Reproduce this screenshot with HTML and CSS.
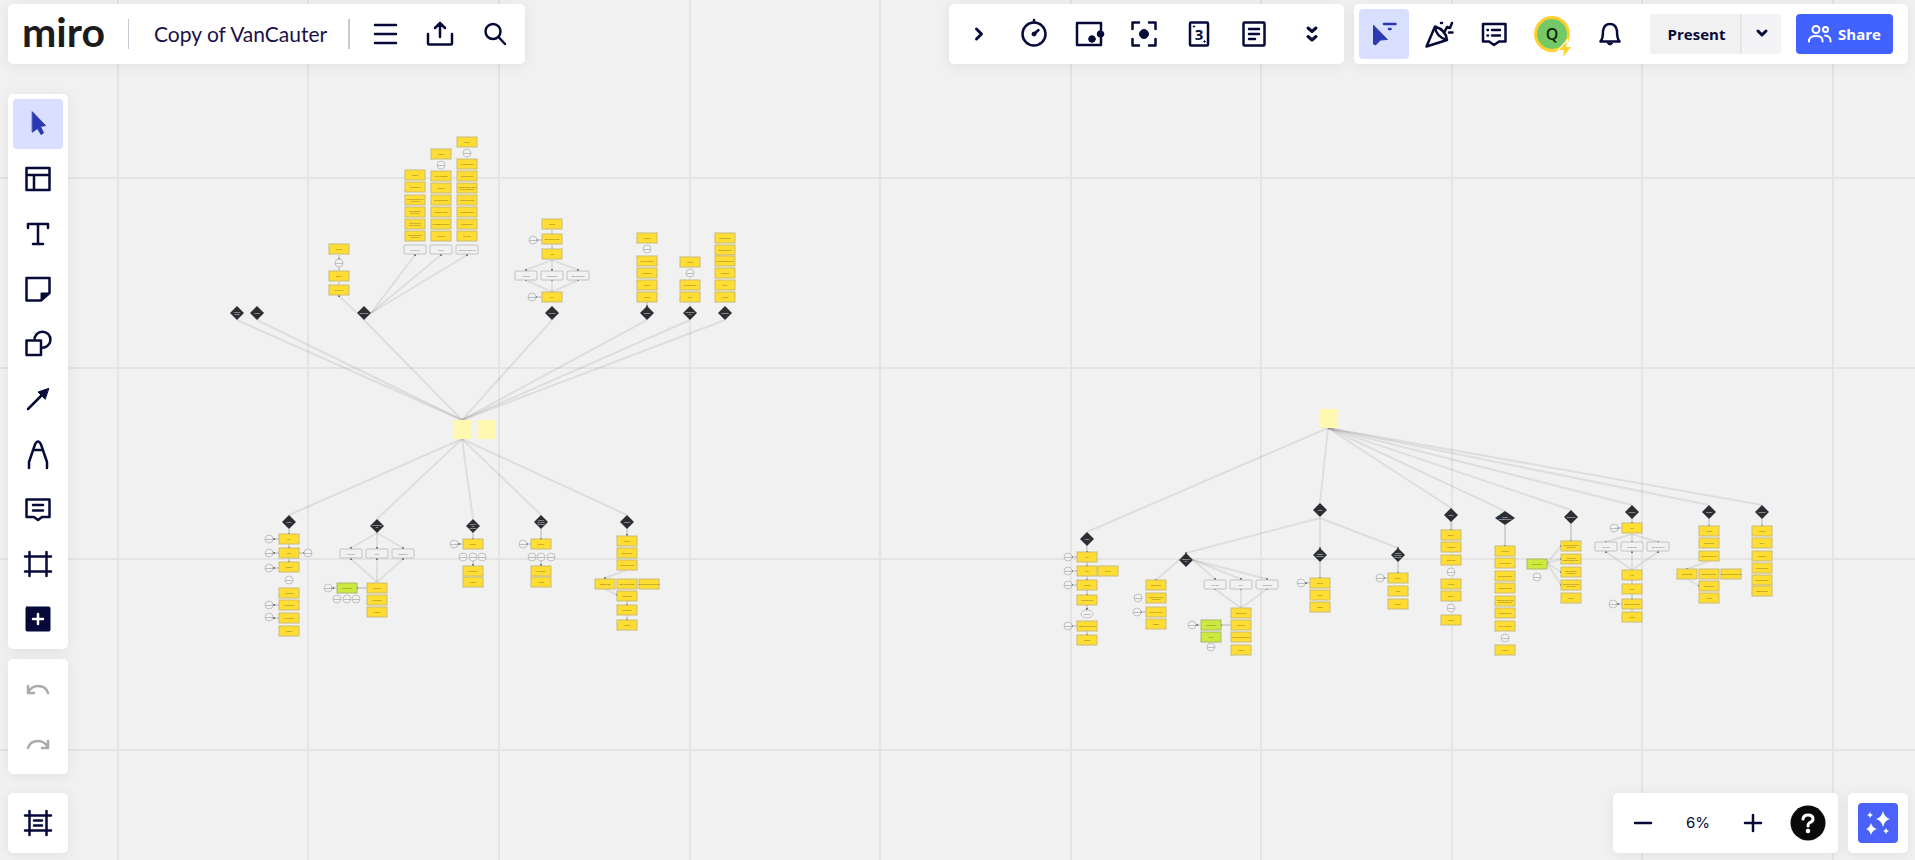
FILE: index.html
```html
<!DOCTYPE html>
<html lang="en">
<head>
<meta charset="utf-8">
<title>Copy of VanCauter</title>
<link rel="stylesheet" href="styles.css">
</head>
<body>
<svg class="board" id="board" role="img" aria-label="Board canvas"></svg>

<div class="app">
  <header class="topbar">
    <div class="panel row">
      <a class="logo" href="#">miro</a>
      <span class="rule"></span>
      <h1 class="title">Copy of VanCauter</h1>
      <span class="rule rule-strong"></span>
      <button class="tool" aria-label="Main menu"><svg class="icon" viewBox="-15 -15 30 30"><path d="M-10-9H11M-10 0H11M-10 9H11"/></svg></button>
      <button class="tool" aria-label="Export"><svg class="icon" viewBox="-15 -15 30 30"><path d="M-12 0v9.500q0 1 1 1h22q1 0 1-1V0M0 3V-11M-5-6L0-11L5-6"/></svg></button>
      <button class="tool" aria-label="Search"><svg class="icon" viewBox="-15 -15 30 30"><circle cx="-2" cy="-2.500" r="7.500"/><path d="M3.500 3L10 10"/></svg></button>
    </div>

    <div class="row groups">
      <div class="panel row">
        <button class="tool" aria-label="Collapse"><svg class="icon bold" viewBox="-15 -15 30 30"><path d="M-2.500-5L2.500 0L-2.500 5"/></svg></button>
        <button class="tool" aria-label="Timer"><svg class="icon" viewBox="-15 -15 30 30"><circle r="11.500"/><path d="M0-14v2M0 0L4.500-4"/><circle class="solid" r="2"/></svg></button>
        <button class="tool" aria-label="Voting"><svg class="icon" viewBox="-15 -15 30 30"><path d="M12-4V-11H-12V11H12V4"/><circle class="solid" cx="3" cy="5" r="3.300"/><circle class="solid" cx="11.500" cy="0" r="3.300"/></svg></button>
        <button class="tool" aria-label="Focus"><svg class="icon" viewBox="-15 -15 30 30"><path d="M-11.500-5V-11.500H-5M5-11.500H11.500V-5M11.500 5V11.500H5M-5 11.500H-11.500V5"/><circle class="solid" r="4.500"/></svg></button>
        <button class="tool" aria-label="Estimation"><svg class="icon" viewBox="-15 -15 30 30"><rect x="-9" y="-11.500" width="18" height="23" rx="1"/><text class="card-number" y="6">3</text><circle class="solid" cx="-5" cy="-7.500" r=".700"/><circle class="solid" cx="5.500" cy="7.500" r=".700"/></svg></button>
        <button class="tool" aria-label="Notes"><svg class="icon" viewBox="-15 -15 30 30"><rect x="-10.500" y="-11.500" width="21" height="23" rx="1"/><path d="M-5-5H5M-5 0H5M-5 5H1"/></svg></button>
        <button class="tool tool-wide" aria-label="More tools"><svg class="icon bold" viewBox="-15 -15 30 30"><path d="M-4-6L0-2.500L4-6M-4 2.500L0 6L4 2.500"/></svg></button>
      </div>

      <div class="panel row">
        <button class="tool active" aria-label="Show cursors"><svg class="icon" viewBox="-15 -15 30 30"><path class="solid" d="M-10.500-8.500V10L-8.500 11L-3.500 6L3 5.500Z"/><path d="M0-10H11.500M5-5h1.500"/></svg></button>
        <button class="tool" aria-label="Reactions"><svg class="icon" viewBox="-15 -15 30 30"><path d="M-4-7.500L-12.500 12.500L8 6Q7-4-4-7.500ZM-4-7.500Q-3 3 8 6M6-3L8-7L11-6L13-11M10-1.500H13.500M2-11h1"/></svg></button>
        <button class="tool" aria-label="Comments"><svg class="icon" viewBox="-15 -15 30 30"><path d="M-11-10H11.500V7.500H5L0 11L-5 7.500H-11ZM-6.500-4h.500M-6.500 1.500h.500M-2-4H6M-2 1.500H6"/></svg></button>
        <button class="avatar-button" aria-label="Account"><span class="avatar">Q</span><svg class="bolt" viewBox="0 0 16 20"><path d="M10 2L2 11H7L6 18L14 8H9Z"/></svg></button>
        <button class="tool bell" aria-label="Notifications"><svg class="icon" viewBox="-15 -15 30 30"><path d="M-9.500 7.500Q-7 5-7-3Q-6-10 0-10Q6-10 7-3Q7 5 9.500 7.500Z"/><path class="solid" d="M-2.500 9H2.500Q2 11 0 11Q-2 11-2.500 9Z"/></svg></button>
        <div class="row present">
          <button class="present-main">Present</button>
          <button class="present-more" aria-label="Presentation options"><svg class="icon bold" viewBox="-15 -15 30 30"><path d="M-4-3L0 1L4-3"/></svg></button>
        </div>
        <button class="share"><svg class="people" viewBox="0 0 24 20"><circle cx="8" cy="5.500" r="3.500"/><circle cx="17.500" cy="5.500" r="2.500"/><path d="M1 17.500V16Q2 12 8 12Q14 12 14.500 16V17.500M17 11.500Q22 12 22.500 16V17.500"/></svg>Share</button>
      </div>
    </div>
  </header>

  <main class="stage">
    <nav class="rail" aria-label="Tools">
      <div class="panel column">
        <button class="tool active" aria-label="Select"><svg class="icon" viewBox="-15 -15 30 30"><path class="solid thin" d="M-5.500-12L7.500 1.500L2.500 2.500L5.500 9L3 10.500L-.500 4.500L-5.500 8Z"/></svg></button>
        <button class="tool" aria-label="Templates"><svg class="icon" viewBox="-15 -15 30 30"><path d="M-11.500-11H11.500V11H-11.500ZM-11.500-4H11.500M-4-4V11"/></svg></button>
        <button class="tool" aria-label="Text"><svg class="icon" viewBox="-15 -15 30 30"><path d="M-10-6V-10H10V-6M0-10V10M-5 10H5"/></svg></button>
        <button class="tool" aria-label="Sticky note"><svg class="icon" viewBox="-15 -15 30 30"><path d="M-11.500-11H11.500V4L3 11.500H-11.500Z"/><path class="solid" d="M3 11V4H11.500Z"/></svg></button>
        <button class="tool" aria-label="Shapes"><svg class="icon" viewBox="-15 -15 30 30"><path d="M-11.500-3.500H3V11H-11.500ZM-3.500-3.500A8 8 0 1 1 3 3.500"/></svg></button>
        <button class="tool" aria-label="Connection line"><svg class="icon" viewBox="-15 -15 30 30"><path d="M-10 10L5-5"/><path class="solid thin" d="M10.500-10.500L0-7L7 0Z"/></svg></button>
        <button class="tool" aria-label="Pen"><svg class="icon" viewBox="-15 -15 30 30"><path d="M-9 14V8L-3-9.500Q0-15.500 3-9.500L9 8V14M-5-4H5"/></svg></button>
        <button class="tool" aria-label="Comment"><svg class="icon" viewBox="-15 -15 30 30"><path d="M-11.500-9.500H11.500V8H4L0 11L-4 8H-11.500ZM-5-4H5M-5 1.500H5"/></svg></button>
        <button class="tool" aria-label="Frame"><svg class="icon" viewBox="-15 -15 30 30"><path d="M-13-7.500H13M-13 7.500H13M-8.500-12V12M8.500-12V12"/></svg></button>
        <button class="tool" aria-label="More apps"><svg class="icon" viewBox="-15 -15 30 30"><rect class="solid" x="-12" y="-12" width="24" height="24" rx="1"/><path class="light" d="M-5 0H5M0-5V5"/></svg></button>
      </div>
      <div class="panel column">
        <button class="tool" disabled aria-label="Undo"><svg class="icon" viewBox="-15 -15 30 30"><path d="M10 4Q8-3 0-3Q-6-3-10 3M-10-3V4H-4"/></svg></button>
        <button class="tool" disabled aria-label="Redo"><svg class="icon" viewBox="-15 -15 30 30"><path d="M-10 4Q-8-3 0-3Q6-3 10 3M10-3V4H4"/></svg></button>
      </div>
      <div class="panel column rail-end">
        <button class="tool" aria-label="Frames list"><svg class="icon" viewBox="-15 -15 30 30"><path d="M-13-7.500H13M-13 7.500H13M-8.500-12V12M8.500-12V12M-4-2.500H4M-4 2.500H4"/></svg></button>
      </div>
    </nav>

    <div class="row corner">
      <div class="panel row">
        <button class="tool" aria-label="Zoom out"><svg class="icon" viewBox="-15 -15 30 30"><path d="M-8 0H8"/></svg></button>
        <button class="tool zoom-level">6%</button>
        <button class="tool" aria-label="Zoom in"><svg class="icon" viewBox="-15 -15 30 30"><path d="M-8 0H8M0-8V8"/></svg></button>
        <button class="tool" aria-label="Help"><svg class="help" viewBox="-18 -18 36 36"><circle class="help-disc" r="17.500"/><path d="M-5-4Q-4.500-8 0-8Q5-8 5-4Q5-1.500 2-.500Q0 .500 0 3"/><circle class="help-dot" cy="8" r="2.300"/></svg></button>
      </div>
      <div class="panel row">
        <button class="tool" aria-label="AI assistant"><svg class="spark" viewBox="0 0 40 40"><path d="M25 8Q26.500 14.500 32 16Q26.500 17.500 25 24Q23.500 17.500 18 16Q23.500 14.500 25 8ZM13 20Q14.500 25 19 26Q14.500 27 13 32Q11.500 27 8 26Q11.500 25 13 20ZM12 9Q12.500 11.500 15 12Q12.500 12.500 12 15Q11.500 12.500 9 12Q11.500 11.500 12 9ZM28 25Q28.500 27.500 31 28Q28.500 28.500 28 31Q27.500 28.500 25 28Q27.500 27.500 28 25Z"/></svg></button>
      </div>
    </div>
  </main>
</div>
<script src="board.js"></script>
</body>
</html>
```
FILE: styles.css
```css
* { box-sizing: border-box; }

body {
  margin: 0;
  overflow: hidden;
  background: #f1f1f1;
  color: #050a38;
  font-family: "Open Sans", "Noto Sans", sans-serif;
}

button {
  border: 0;
  padding: 0;
  background: none;
  color: inherit;
  font: inherit;
  cursor: pointer;
}

/* Canvas */
.board { position: absolute; inset: 0; width: 100%; height: 100%; }
.grid-line { stroke: #e4e4e4; stroke-width: 2px; }
.link { stroke: #000; stroke-opacity: .08; stroke-width: 2px; fill: none; }
.short-link { stroke: #b4b4b4; stroke-width: 1px; }
.tip { fill: #555; }
.sticky { fill: #fff8b0; }
.note { fill: #ffdd33; stroke: #c9bb78; }
.note-green { fill: #cbea3d; stroke: #a9b670; }
.pill, .ring { fill: #f1f1f1; stroke: #c2c2c2; }
.diamond { fill: #2d2e33; }
.label { font-family: "Open Sans", sans-serif; font-size: 2px; text-anchor: middle; fill: #6b5a10; }
.label-light { fill: #fff; }
.label-grey { fill: #666; }

/* Page frame */
.app {
  position: relative;
  display: flex;
  flex-direction: column;
  gap: 30px;
  min-height: 100vh;
  padding: 4px 7px 7px 8px;
  pointer-events: none;
}
.panel {
  padding: 5px;
  border-radius: 5px;
  background: #fff;
  box-shadow: 0 2px 14px rgba(5, 0, 56, .07);
  pointer-events: auto;
}
.row { display: flex; align-items: center; }
.column { display: flex; flex-direction: column; gap: 5px; }
.panel.row { gap: 5px; }
.topbar { display: flex; justify-content: space-between; }
.groups { gap: 10px; }
.stage { flex: 1; display: flex; justify-content: space-between; }
.rail { display: flex; flex-direction: column; gap: 10px; }
.rail-end { margin-top: auto; }
.corner { gap: 10px; align-self: flex-end; }

/* Tools */
.tool {
  display: flex;
  align-items: center;
  justify-content: center;
  width: 50px;
  height: 50px;
  border-radius: 4px;
}
.tool-wide { width: 55px; }
.active { background: #d9dfff; color: #2b3ab3; }
.tool:disabled { color: #aaa; }
.icon {
  width: 30px;
  height: 30px;
  overflow: visible;
  fill: none;
  stroke: currentColor;
  stroke-width: 2.500px;
  stroke-linecap: round;
  stroke-linejoin: round;
}
.bold { stroke-width: 3px; }
.solid { fill: currentColor; stroke-width: 1px; }
.thin { stroke-width: 1px; }
.light { stroke: #fff; }
.card-number {
  font: 700 15px "Open Sans", sans-serif;
  text-anchor: middle;
  fill: currentColor;
  stroke: none;
}

/* Board title */
.logo {
  width: 92px;
  padding: 0 0 4px 9px;
  color: #1c1c1e;
  font: 700 41px/46px Lato, sans-serif;
  text-decoration: none;
}
.rule { width: 1px; height: 30px; margin-left: 18px; background: #c9c9d6; }
.rule-strong { width: 2px; margin: 0 5px 0 16px; }
.title {
  margin: 0 0 0 20px;
  color: #1a1148;
  font: 400 21px/28px Lato, sans-serif;
}

/* Account group */
.avatar-button { position: relative; width: 56px; height: 50px; }
.avatar {
  display: block;
  width: 36px;
  height: 36px;
  margin: 0 auto;
  border: 3px solid #ffd02f;
  border-radius: 50%;
  background: #74c966;
  color: #10240d;
  font: 600 16px/30px "Open Sans", sans-serif;
}
.bolt { position: absolute; right: 6px; bottom: 0; width: 18px; height: 20px; fill: #ffd02f; stroke: #fff; stroke-width: 2px; paint-order: stroke; }
.present {
  gap: 2px;
  margin-left: 10px;
  border-radius: 4px;
  overflow: hidden;
  background: #e4e4ea;
  font-size: 15px;
  font-weight: 700;
}
.present-main { min-width: 90px; height: 40px; padding: 0 12px 0 15px; background: #f1f1f2; }
.present-more { display: flex; align-items: center; justify-content: center; width: 39px; height: 40px; background: #f4f4f7; }
.share {
  display: flex;
  align-items: center;
  justify-content: center;
  gap: 6px;
  min-width: 97px;
  height: 40px;
  margin: 0 10px;
  border-radius: 4px;
  background: #4262ff;
  color: #fff;
  font-size: 15px;
  font-weight: 700;
}
.people { width: 24px; height: 20px; fill: none; stroke: #fff; stroke-width: 2px; stroke-linecap: round; }

/* Bottom corner */
.zoom-level { font: 400 15px/20px Inter, sans-serif; }
.help { width: 36px; height: 36px; fill: none; stroke: #fff; stroke-width: 3px; stroke-linecap: round; }
.help-disc { fill: #0a0a0a; stroke: none; }
.help-dot { fill: #fff; stroke: none; }
.spark { width: 40px; height: 40px; border-radius: 4px; background: #4a61fa; fill: #fff; }
```
FILE: board.js
```js
const board = document.getElementById("board");
const NS = "http://www.w3.org/2000/svg";

function add(tag, className, attrs, text) {
  const el = document.createElementNS(NS, tag);
  el.setAttribute("class", className);
  for (const key in attrs) el.setAttribute(key, attrs[key]);
  if (text) el.textContent = text;
  board.appendChild(el);
}

function label(x, y, text, className) {
  const lines = text.split("|");
  lines.forEach((line, i) =>
    add("text", "label " + className, { x, y: y + 1 + (i - (lines.length - 1) / 2) * 2 }, line));
}

const line = (className, x1, y1, x2, y2) => add("line", className, { x1, y1, x2, y2 });
const tip = (x, y) => add("circle", "tip", { cx: x, cy: y, r: 1 });

function note(x, y, text, className = "note") {
  add("rect", className, { x: x - 10, y: y - 5, width: 20, height: 10 });
  label(x, y, text, "");
}
function pill(x, y, text) {
  add("rect", "pill", { x: x - 11, y: y - 5, width: 22, height: 9, rx: 1 });
  label(x, y, text, "label-grey");
}
function ring(x, y, text, rx = 4) {
  add("ellipse", "ring", { cx: x, cy: y, rx, ry: 4 });
  label(x, y, text, "label-grey");
}
function diamond(x, y, text, rx = 7) {
  add("path", "diamond", { d: `M${x - rx} ${y}L${x} ${y - 7}L${x + rx} ${y}L${x} ${y + 7}Z` });
  label(x, y, text, "label-light");
}

/* Grid */
for (const x of [118, 308, 499, 690, 880, 1071, 1261, 1452, 1642, 1833, 2024, 2214, 2405]) line("grid-line", x, 0, x, 3000);
for (const y of [178, 368, 559, 750, 941, 1132, 1322]) line("grid-line", 0, y, 4000, y);

/* Long connectors: start, then every end point */
const fans = [
  [462, 420, [237, 320], [257, 320], [364, 320], [552, 320], [647, 320], [690, 320], [725, 320]],
  [462, 439, [289, 515], [377, 519], [473, 519], [541, 515], [627, 515]],
  [1328, 428, [1087, 532], [1320, 503], [1451, 508], [1505, 511], [1571, 510], [1632, 505], [1709, 505], [1762, 505]],
  [371, 313, [415, 255], [441, 255], [467, 255]],
  [357, 313, [339, 296]],
  [552, 260, [526, 270], [552, 270], [578, 270]],
  [552, 292, [526, 280], [552, 280], [578, 280]],
  [377, 533, [351, 548], [377, 548], [403, 548]],
  [377, 582, [351, 559], [377, 559], [403, 559]],
  [1320, 518, [1186, 553], [1320, 548], [1398, 548]],
  [1179, 560, [1156, 580]],
  [1193, 560, [1215, 579], [1241, 579], [1267, 579]],
  [1241, 608, [1215, 589], [1241, 589], [1267, 589]],
  [1547, 563, [1561, 546], [1561, 559], [1561, 572], [1561, 585]],
  [1632, 534, [1606, 542], [1632, 542], [1658, 542]],
  [1632, 570, [1606, 552], [1632, 552], [1658, 552]],
  [627, 570, [605, 578]], [605, 589, [617, 595]],
  [1709, 561, [1687, 569]], [1687, 579, [1699, 586]],
];
fans.forEach(([x, y, ...ends], i) => ends.forEach(([ex, ey]) => {
  line("link", x, y, ex, ey);
  if (i > 2) tip(ex, ey);
}));

/* Short connectors between stacked items */
const stems = [
  [339, 255, 259], [339, 267, 272], [339, 282, 286],
  [552, 230, 235], [552, 245, 250], [647, 302, 306],
  [289, 529, 534], [289, 544, 548], [289, 558, 562],
  [473, 533, 539], [473, 561, 565], [541, 529, 539], [541, 561, 565],
  [627, 529, 535], [627, 600, 605], [627, 615, 620],
  [1087, 546, 552], [1087, 562, 566], [1087, 576, 580], [1087, 590, 595], [1087, 605, 609], [1087, 631, 635],
  [1320, 562, 578], [1398, 562, 573], [1451, 522, 530], [1505, 525, 546],
  [1571, 524, 541], [1632, 518, 523], [1632, 580, 585], [1632, 594, 599], [1632, 609, 613],
  [1709, 519, 526], [1762, 519, 526],
];
for (const [x, y1, y2] of stems) { line("short-link", x, y1, x, y2); tip(x, y2); }

const arms = [
  [542, 537, 240], [542, 536, 297], [279, 274, 539], [279, 274, 553], [279, 274, 568],
  [299, 304, 553], [279, 274, 605], [279, 274, 618], [336, 333, 588], [367, 357, 588],
  [463, 459, 544], [531, 527, 544], [1077, 1072, 557], [1077, 1072, 571], [1077, 1072, 585],
  [1077, 1072, 626], [1146, 1141, 612], [1200, 1197, 625], [1231, 1221, 625],
  [1310, 1306, 583], [1388, 1384, 578], [1622, 1618, 528], [1622, 1618, 604],
];
for (const [x1, x2, y] of arms) { line("short-link", x1, y, x2, y); tip(x2, y); }

/* Columns of notes: x, then [y, label] */
const columns = [
  [339, [249, "Fasten"], [276, "search"], [290, "search IG"]],
  [415, [175, "Fasten"], [187, "certificaten"], [200, "bedrijven en werk|opleiding"], [212, "werknemers|opleiding"], [224, "opleiding en|ondernemen"], [236, "werkzoekenden|opleiding"]],
  [441, [154, "Fasten"], [176, "Eid-Nummers"], [188, "artikels"], [200, "Subcontractors"], [212, "manuele-data"], [224, "personeelsbeheer"], [236, "gelieven"]],
  [467, [142, "Fasten"], [164, "Eid-Nummers"], [176, "personeelslid"], [188, "voorwaarden, foto|geuploaddaten"], [200, "bestaande foto"], [212, "Subcontractors"], [224, "prefabnaam"], [236, "gelieven"]],
  [552, [224, "Fasten"], [239, "offerteaanvraag"], [254, "info"], [297, "skill"]],
  [647, [238, "Fasten"], [261, "Eid-Nummers"], [273, "opnemen"], [285, "search"], [297, "search"]],
  [690, [262, "Fasten"], [285, "Eid-Nummers"], [297, "login"]],
  [725, [238, "downloaden"], [250, "communicatie"], [261, "productinnovation"], [273, "contacts"], [285, "filter"], [297, "profile"]],
  [289, [539, "skill"], [553, "filter"], [567, "Klanten"], [593, "contacts"], [605, "uitnodigen"], [618, "certificaat"], [631, "Fasten"]],
  [377, [588, "facturen"], [600, "certificaat"], [612, "Fasten"]],
  [473, [544, "search"], [571, "certificaat"], [582, "Fasten"]],
  [541, [544, "search"], [571, "certificaat"], [582, "Fasten"]],
  [627, [541, "profile"], [553, "weergeven"], [565, "gezamenlijkheid"], [584, "offerteaanvraag"], [596, "paginaten"], [610, "certificaat"], [625, "Fasten"]],
  [605, [584, "contactinfo"]], [649, [584, "communicatieaanvraag"]],
  [1087, [557, "skill"], [571, "filter"], [585, "Klanten"], [600, "Nieuwsartikel"], [626, "Factuurartikelprijs"], [640, "Fasten"]],
  [1108, [571, "search"]],
  [1156, [585, "offertetype"], [598, "productcontent|contacten"], [612, "Factuurprijzen"], [624, "Fasten"]],
  [1241, [613, "offertetype"], [625, "facturen"], [637, "certificaataanvraag"], [650, "Fasten"]],
  [1320, [583, "search"], [595, "filter"], [607, "Fasten"]],
  [1398, [578, "search"], [591, "filter"], [604, "Fasten"]],
  [1451, [535, "search"], [547, "contacts"], [560, "opleiding"], [584, "artikels"], [596, "search"], [620, "Fasten"]],
  [1505, [551, "gelieven"], [563, "artikelnaam"], [576, "Subcontractors"], [588, "bestaande foto"], [601, "voorwaarden, foto|geuploaddaten"], [613, "personeelslid"], [626, "Eid-Nummers"], [650, "Fasten"]],
  [1571, [546, "werkzoekenden|opleiding"], [559, "opleiding|ondernemen opl."], [572, "werknemers|opleiding"], [585, "bedrijven en werk|opleiding"], [598, "Fasten"]],
  [1632, [528, "skill"], [575, "info"], [589, "login"], [604, "offerteaanvraag"], [617, "Fasten"]],
  [1709, [531, "profile"], [543, "weergeven"], [556, "gezamenlijkheid"], [574, "offerteaanvraag"], [586, "paginaten"], [598, "Fasten"]],
  [1687, [574, "contactinfo"]], [1731, [574, "communicatieaanvraag"]],
  [1762, [531, "profile"], [543, "filter"], [556, "contacts"], [568, "productnaam"], [580, "communicatie"], [591, "downloaden"]],
];
for (const [x, ...items] of columns) for (const [y, text] of items) note(x, y, text);

for (const [x, y, text] of [[347, 588, "uitnodigen"], [1211, 625, "uitnodigen"], [1211, 637, "filter"], [1537, 564, "werknemer"]])
  note(x, y, text, "note-green");

const pills = [
  [415, 250, "particulier"], [441, 250, "bedrijf"], [467, 250, "onderwijsinstelling"],
  [526, 276, "services"], [552, 276, "producten"], [578, 276, "communicatie"],
  [351, 554, "services"], [377, 554, "filter"], [403, 554, "producten"],
  [1215, 585, "services"], [1241, 585, "filter"], [1267, 585, "producten"],
  [1606, 547, "services"], [1632, 547, "producten"], [1658, 547, "communicatie"],
];
for (const [x, y, text] of pills) pill(x, y, text);

const rings = [
  [339, 263], [441, 165], [467, 153], [533, 240], [532, 297], [647, 249], [690, 273],
  [269, 539], [269, 553], [269, 568], [269, 605], [269, 617], [308, 553], [289, 580],
  [328, 588], [337, 599], [347, 599], [356, 599], [454, 544], [463, 557], [473, 557], [482, 557],
  [523, 544], [532, 557], [541, 557], [551, 557], [1068, 557], [1068, 571], [1068, 585], [1068, 626],
  [1138, 598], [1137, 612], [1192, 625], [1211, 647], [1301, 583], [1380, 578], [1451, 572], [1451, 608],
  [1505, 638], [1537, 577], [1614, 528], [1613, 604],
];
for (const [x, y] of rings) ring(x, y, "contact");
ring(1087, 614, "contact", 6);

const diamonds = [
  [237, 313, "bedrijf|naam"], [257, 313, "naam"], [364, 313, "opleiding"], [552, 313, "service"],
  [647, 313, "profiel"], [690, 313, "zoekertje|nu"], [725, 313, "contact"], [289, 522, "klant"],
  [377, 526, "uitnodigen|nu"], [473, 526, "bedrijf|en|contact"], [541, 522, "bedrijf|en zoek|contact"], [627, 522, "profiel"],
  [1087, 539, "klant"], [1186, 560, "facturen|nu"], [1320, 510, "klant"], [1320, 555, "bedrijf|contact"],
  [1398, 555, "bedrijf|en zoek|contact"], [1451, 515, "login"], [1571, 517, "opleiding"],
  [1632, 512, "service"], [1709, 512, "profiel"], [1762, 512, "contact"],
];
for (const [x, y, text] of diamonds) diamond(x, y, text);
diamond(1505, 518, "naam|personeelslid", 10);

/* Hub stickies */
for (const [x, y] of [[454, 420], [478, 420], [1320, 409]])
  add("rect", "sticky", { x, y, width: 17, height: 19 });
```
